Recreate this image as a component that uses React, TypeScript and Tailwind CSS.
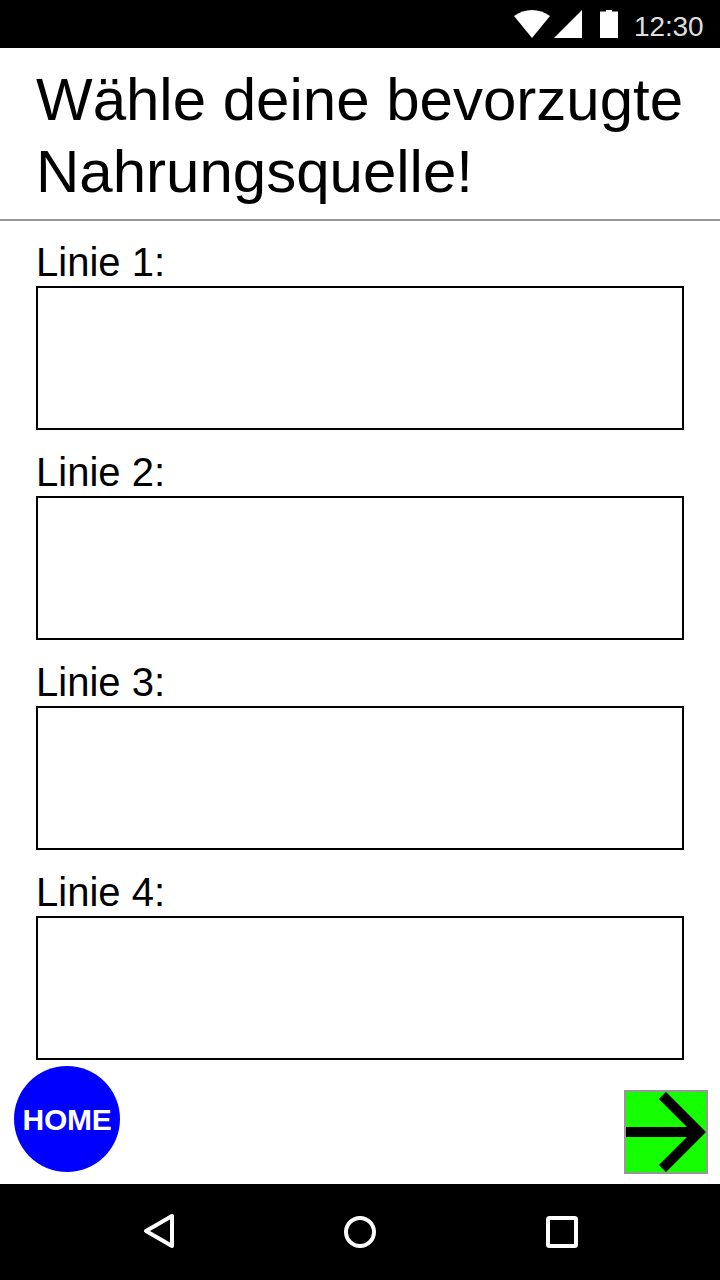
const lines = [1, 2, 3, 4];

function StatusBar() {
  return (
    <div className="flex h-12 shrink-0 items-center bg-black pl-[514px]">
      <svg width="120" height="48" viewBox="0 0 120 48" fill="#fff" aria-hidden="true">
        <path d="M0 16 C10.5 8 25.5 8 36 16 L18 38 Z" />
        <path d="M40 38 L68 10 V38 Z" />
        <path d="M86 11.5 H92 V10 H98 V11.5 H104 V38 H86 Z" />
      </svg>
      <span className="pt-1.5 text-[28px] leading-[32px] tracking-[-0.1px] text-[#dedede]">12:30</span>
    </div>
  );
}

function LineField({ n }: { n: number }) {
  return (
    <label className="block pt-[22px]">
      <span className="block text-[40px] leading-[40px]">Linie {n}:</span>
      <input className="mt-1 block h-36 w-full border-2 border-black bg-white px-4 text-[40px] outline-none" />
    </label>
  );
}

function NavBar() {
  return (
    <nav className="flex h-24 shrink-0 items-center bg-black">
      <svg width="720" height="96" viewBox="0 0 720 96" fill="none" stroke="#fff" strokeWidth="4" strokeLinejoin="round" aria-hidden="true">
        <path d="M146 47 L172 32 V62 Z" />
        <circle cx="360" cy="48" r="14" />
        <rect x="548" y="34" width="28" height="28" rx="1.5" />
      </svg>
    </nav>
  );
}

export default function App() {
  return (
    <div className="flex h-[1280px] w-[720px] flex-col overflow-hidden bg-white font-['Liberation_Sans',Arial,sans-serif] text-black">
      <StatusBar />
      <header className="h-[173px] shrink-0 border-b-2 border-[#979797] pt-4 pl-9">
        <h1 className="text-[60px] leading-[72px] whitespace-nowrap">
          Wähle deine bevorzugte
          <br />
          Nahrungsquelle!
        </h1>
      </header>
      <main className="-mt-px shrink-0 px-9">
        {lines.map((n) => (
          <LineField key={n} n={n} />
        ))}
      </main>
      <footer className="flex flex-1 items-start justify-between pt-1.5 pr-3 pl-3.5">
        <button className="flex size-[106px] items-center justify-center rounded-full bg-[#0000ff] text-[30px] font-bold tracking-[-0.3px] text-white">
          HOME
        </button>
        <button className="mt-6 size-[84px] border-2 border-[#979797] bg-[#15ff00]" aria-label="Weiter">
          <svg width="80" height="80" viewBox="0 0 80 80" fill="none" stroke="#000" strokeWidth="10" aria-hidden="true">
            <path d="M0 40 H72" />
            <path d="M36.5 3.5 L73 40 L36.5 76.5" />
          </svg>
        </button>
      </footer>
      <NavBar />
    </div>
  );
}
